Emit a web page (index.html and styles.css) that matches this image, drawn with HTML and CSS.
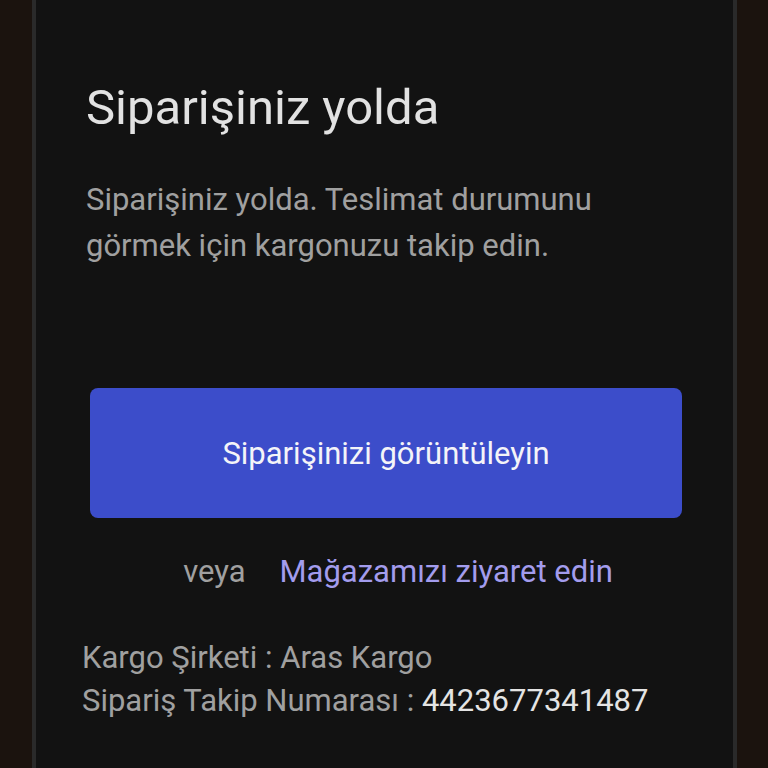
FILE: index.html
```html
<!DOCTYPE html>
<html lang="tr">
<head>
<meta charset="utf-8">
<link rel="stylesheet" href="styles.css">
</head>
<body>
<div class="frame">
  <main class="panel">
    <h1 class="title">Siparişiniz yolda</h1>
    <p class="lead">Siparişiniz yolda. Teslimat durumunu görmek için kargonuzu takip edin.</p>
    <a class="button">Siparişinizi görüntüleyin</a>
    <div class="alt"><span class="or">veya</span><a class="link">Mağazamızı ziyaret edin</a></div>
    <div class="info">
      <div class="row">Kargo Şirketi : Aras Kargo</div>
      <div class="row">Sipariş Takip Numarası : <span class="num">4423677341487</span></div>
    </div>
  </main>
</div>
</body>
</html>
```
FILE: styles.css
```css
html, body { margin: 0; padding: 0; }
body { background: #1b130e; font-family: Roboto, "Noto Sans", sans-serif; width: 768px; height: 768px; overflow: hidden; }
.frame { display: flex; justify-content: center; padding-left: 32px; padding-right: 31px; height: 768px; }
.panel { flex: 1; background: #121212; border-left: 4px solid #2a2a2a; border-right: 4px solid #2a2a2a; height: 768px; box-sizing: border-box; padding: 78px 50px 0 50px; }
.title { margin: 0; font-weight: 400; font-size: 49px; line-height: 60px; color: #e2e2e2; }
.lead { margin: 39px 0 0; font-weight: 400; font-size: 31px; line-height: 46px; color: #a0a0a0; width: 560px; }
.button { display: flex; align-items: center; justify-content: center; margin: 119px 0 0 4px; width: 592px; height: 130px; border-radius: 8px; background: #3c4dca; color: #f4f4f8; font-size: 31px; }
.alt { display: flex; justify-content: center; gap: 34px; margin-top: 30px; font-size: 31px; line-height: 48px; padding-left: 27px; }
.or { color: #a0a0a0; }
.link { color: #a39ced; }
.info { margin-top: 40px; margin-left: -4px; font-weight: 400; font-size: 31px; line-height: 43px; color: #a0a0a0; }
.num { color: #e4e4e4; }
```
